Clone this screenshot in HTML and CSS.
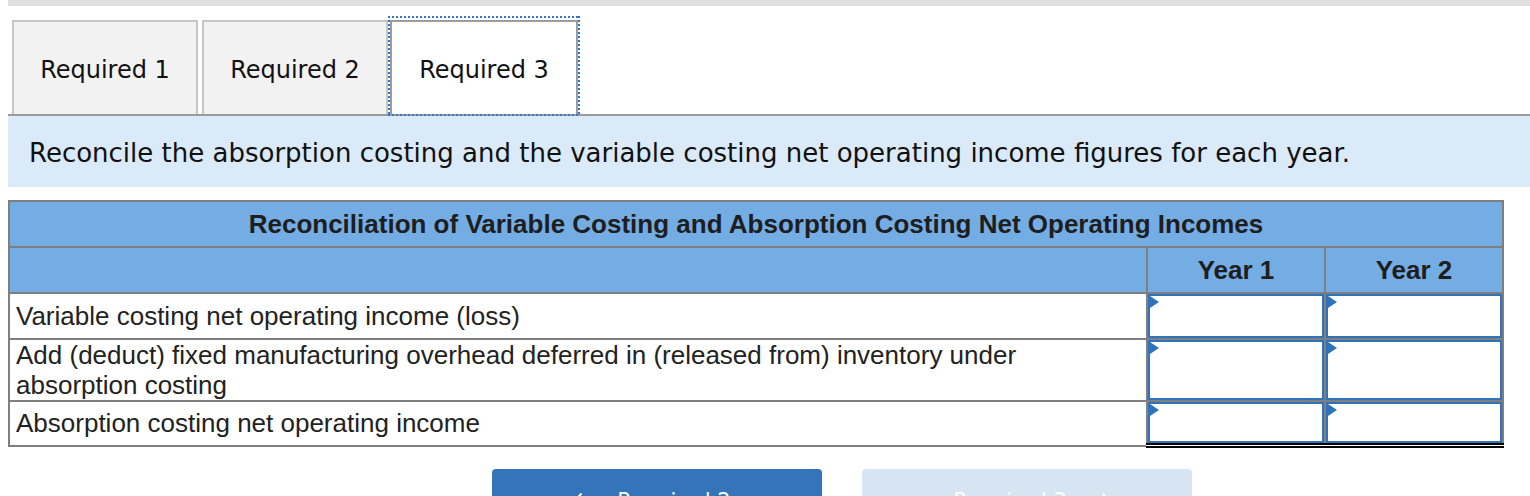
FILE: index.html
```html
<!DOCTYPE html>
<html lang="en">
<head>
<meta charset="utf-8">
<title>Required 3</title>
<link rel="stylesheet" href="styles.css">
</head>
<body>
<div class="topbar"></div>
<div class="tabs">
  <div class="tab">Required 1</div>
  <div class="tab">Required 2</div>
  <div class="tab active">Required 3</div>
</div>
<div class="panel">Reconcile the absorption costing and the variable costing net operating income figures for each year.</div>
<table class="recon">
  <colgroup><col class="c-label"><col class="c-year"><col class="c-year"></colgroup>
  <tr class="title"><th colspan="3">Reconciliation of Variable Costing and Absorption Costing Net Operating Incomes</th></tr>
  <tr class="head"><th></th><th>Year 1</th><th>Year 2</th></tr>
  <tr class="r1">
    <td class="label">Variable costing net operating income (loss)</td>
    <td class="cell"><div class="inp"></div></td>
    <td class="cell"><div class="inp"></div></td>
  </tr>
  <tr class="r2">
    <td class="label">Add (deduct) fixed manufacturing overhead deferred in (released from) inventory under<br>absorption costing</td>
    <td class="cell"><div class="inp"></div></td>
    <td class="cell"><div class="inp"></div></td>
  </tr>
  <tr class="r3">
    <td class="label">Absorption costing net operating income</td>
    <td class="cell total"><div class="inp"></div></td>
    <td class="cell total"><div class="inp"></div></td>
  </tr>
</table>
<div class="nav">
  <button class="btn prev"><svg class="chev" width="10" height="18" viewBox="0 0 10 18"><polyline points="8.5,1.5 1.5,9 8.5,16.5" fill="none" stroke="#fff" stroke-width="2"/></svg><span>Required 2</span></button>
  <button class="btn next"><span>Required 3</span><svg class="chev" width="10" height="18" viewBox="0 0 10 18"><polyline points="1.5,1.5 8.5,9 1.5,16.5" fill="none" stroke="#fff" stroke-width="2"/></svg></button>
</div>
</body>
</html>
```

FILE: styles.css
```css
html, body { margin: 0; padding: 0; }
body {
  padding-left: 8px;
  font-family: "DejaVu Sans", Verdana, sans-serif;
  color: #000;
  background: #fff;
  overflow: hidden;
}
.topbar { height: 6px; background: #e0e0e0; }
.tabs {
  display: flex;
  gap: 4px;
  padding: 14px 0 0 4px;
  border-bottom: 2px solid #9b9b9b;
}
.tab {
  box-sizing: border-box;
  width: 186px;
  height: 94px;
  padding-top: 4px;
  border: 2px solid #c6c6c6;
  border-bottom: none;
  background: #f2f2f2;
  display: flex;
  align-items: center;
  justify-content: center;
  font-size: 24px;
  color: #111;
}
.tab.active {
  position: relative;
  width: 188px;
  margin-left: -2px;
  background: #fff;
  border-color: #9b9b9b;
}
.tab.active::after {
  content: "";
  position: absolute;
  top: -6px;
  bottom: -2px;
  left: -4px;
  right: -4px;
  background:
    repeating-linear-gradient(90deg, #3677c3 0 2px, transparent 2px 4px) top left / 100% 2px no-repeat,
    repeating-linear-gradient(90deg, #3677c3 0 2px, transparent 2px 4px) bottom left / 100% 2px no-repeat,
    repeating-linear-gradient(180deg, #3677c3 0 2px, transparent 2px 4px) top left / 2px 100% no-repeat,
    repeating-linear-gradient(180deg, #3677c3 0 2px, transparent 2px 4px) top right / 2px 100% no-repeat;
  pointer-events: none;
}
.panel {
  box-sizing: border-box;
  height: 71px;
  background: #daeaf9;
  display: flex;
  align-items: center;
  padding-left: 21px;
  padding-top: 2px;
  font-size: 26px;
  color: #111;
}
.recon {
  margin-top: 13px;
  width: 1496px;
  border-collapse: collapse;
  font-family: "Liberation Sans", Arial, sans-serif;
  font-size: 26px;
  color: #222;
}
.c-year { width: 178px; }
.recon th, .recon td { border: 2px solid #7f7f7f; padding: 0; }
.recon th { background: #73ade4; font-weight: bold; font-size: 26px; color: #1e1e1e; }
.title th { height: 44px; }
.head th { height: 44px; }
.label { padding: 0 6px !important; line-height: 30px; vertical-align: middle; }
.cell { vertical-align: top; }
.inp {
  position: relative;
  box-sizing: border-box;
  border: 2px solid #2f74ba;
  background: #fff;
}
.inp::before {
  content: "";
  position: absolute;
  left: 0;
  top: 0;
  border-left: 9px solid #2f74ba;
  border-top: 6px solid transparent;
  border-bottom: 6px solid transparent;
}
.r1 .inp { height: 44px; }
.r2 .inp { height: 60px; }
.r3 .inp { height: 41px; }
.recon td.total { border-bottom: 5px double #000; }
.nav {
  display: flex;
  gap: 40px;
  padding-left: 484px;
  margin-top: 21px;
}
.btn {
  box-sizing: border-box;
  width: 330px;
  height: 60px;
  border: none;
  border-radius: 4px;
  display: flex;
  align-items: flex-start;
  justify-content: center;
  gap: 34px;
  padding: 20px 0 0;
  font-family: "DejaVu Sans", Verdana, sans-serif;
  font-size: 21px;
  line-height: 24px;
  color: #fff;
}
.btn .chev { margin-top: 3px; flex: none; }
.prev { background: #3375b8; padding-right: 10px; }
.next { background: #d7e5f2; padding-left: 10px; }
```
